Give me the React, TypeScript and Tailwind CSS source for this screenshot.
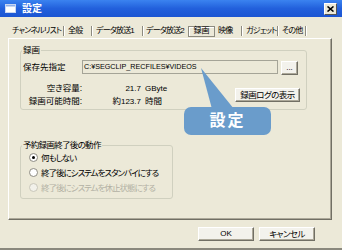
import React from 'react'

const JP = "font-['Liberation_Sans','Noto_Sans_CJK_JP',sans-serif] [font-feature-settings:'palt']"

const Sep = () => (
  <span className="shrink-0 w-[2px] h-[10px] border-l border-l-[#8d8b80] border-r border-r-white" />
)

function Tab({ label, w, pl = 0 }: { label: string; w: string; pl?: number }) {
  return (
    <span className={`shrink-0 whitespace-nowrap text-[8px] tracking-[-0.8px] ${w}`} style={{ paddingLeft: pl }}>
      {label}
    </span>
  )
}

function Btn({ children, className = '' }: { children: React.ReactNode; className?: string }) {
  return (
    <div
      className={`flex items-center justify-center bg-[#f3f2ec] border border-t-white border-l-white border-r-[#716f64] border-b-[#716f64] shadow-[inset_-1px_-1px_0_#aca899] whitespace-nowrap ${className}`}
    >
      {children}
    </div>
  )
}

function Radio({ label, checked = false, disabled = false }: { label: string; checked?: boolean; disabled?: boolean }) {
  return (
    <div className="flex items-center h-[15px] pl-[8px] gap-[3px]">
      <span
        className={`shrink-0 flex items-center justify-center w-[9px] h-[9px] rounded-full border ${
          disabled ? 'border-[#c9c7ba] bg-[#f2f1ea]' : 'border-[#8e8c82] bg-white'
        }`}
      >
        {checked && <span className="w-[3px] h-[3px] rounded-full bg-black" />}
      </span>
      <span className={`whitespace-nowrap tracking-[-1px] ${disabled ? 'text-[#b3b1a4]' : 'text-black'}`}>{label}</span>
    </div>
  )
}

export default function App() {
  return (
    <div className={`relative w-[342px] h-[250px] bg-[#ece9d8] border-b-2 border-b-[#8a887d] text-[8.5px] leading-[12px] text-black ${JP}`}>
      {/* Title bar */}
      <div className="flex items-center h-[17px] bg-gradient-to-b from-[#3b83f0] via-[#2260dc] to-[#1b55d2]">
        <svg width="11" height="9" viewBox="0 0 11 9" className="ml-[5px]">
          <rect x="0.5" y="0.5" width="10" height="8" fill="#fff" stroke="#c8d6f2" />
          <rect x="1" y="1" width="9" height="1.5" fill="#8fb0ea" />
        </svg>
        <span className="ml-[6px] text-white font-bold text-[10px]">設定</span>
        <div className="ml-auto mr-[5px] w-[13px] h-[12px] flex items-center justify-center bg-[#ece9d8] border border-t-white border-l-white border-r-[#555] border-b-[#555]">
          <svg width="7" height="6" viewBox="0 0 7 6">
            <path d="M0.5 0.5 L6.5 5.5 M6.5 0.5 L0.5 5.5" stroke="#000" strokeWidth="1.6" />
          </svg>
        </div>
      </div>

      {/* Tabs */}
      <div className="flex items-center h-[12px] mt-[8px] pl-[12px]">
        <Tab label="チャンネルリスト" w="w-[51px]" />
        <Sep />
        <Tab label="全般" w="w-[26px]" pl={3} />
        <Sep />
        <Tab label="データ放送1" w="w-[49px]" pl={3} />
        <Sep />
        <Tab label="データ放送2" w="w-[44px]" pl={2} />
        <span className="shrink-0 w-[27px] h-[11px] flex items-center justify-center border border-[#8d8b80] shadow-[inset_1px_1px_0_#fff] text-[8px]">
          録画
        </span>
        <Tab label="映像" w="w-[26px]" pl={3} />
        <Sep />
        <Tab label="ガジェット" w="w-[34px]" pl={3} />
        <Sep />
        <Tab label="その他" w="w-[26px]" pl={3} />
        <Sep />
      </div>

      {/* Panel */}
      <div className="ml-[8px] mt-[1px] w-[324px] h-[182px] border border-t-white border-l-white border-r-[#716f64] border-b-[#716f64] shadow-[inset_-1px_-1px_0_#aca899] pl-[11px] pt-[5px]">
        <fieldset className="w-[287px] h-[66px] border border-[#d0d0bf] rounded-[3px]">
          <legend className="ml-[1px] px-[1px]">録画</legend>
          <div className="flex items-start mt-[4px]">
            <span className="w-[61px] pl-[2px] leading-[14px]">保存先指定</span>
            <div className="w-[196px] h-[14px] border border-[#a5a497] bg-[#ece9d8] pl-[1px] text-[7.2px] leading-[12px] whitespace-nowrap">
              C:¥SEGCLIP_RECFILES¥VIDEOS
            </div>
            <Btn className="ml-[3px] mt-[1px] w-[17px] h-[14px] text-[8px] leading-[8px]">...</Btn>
          </div>
          <div className="flex items-start mt-[7px] pr-[6px]">
            <div className="grid grid-cols-[61px_59px_auto] leading-[13px]">
              <span className="text-right">空き容量:</span>
              <span className="text-right text-[8px]">21.7</span>
              <span className="pl-[4px] text-[8px]">GByte</span>
              <span className="text-right">録画可能時間:</span>
              <span className="text-right text-[8px]">
                <span className="text-[8.5px]">約</span>123.7
              </span>
              <span className="pl-[4px]">時間</span>
            </div>
            <Btn className="ml-auto mt-[6px] w-[65px] h-[14px] tracking-[-0.5px]">録画ログの表示</Btn>
          </div>
        </fieldset>

        <fieldset className="mt-[29px] w-[153px] h-[60px] border border-[#d0d0bf] rounded-[3px]">
          <legend className="ml-[1px] px-[1px] tracking-[-0.7px] whitespace-nowrap">予約録画終了後の動作</legend>
          <div className="-mt-[1px]">
            <Radio label="何もしない" checked />
            <Radio label="終了後にシステムをスタンバイにする" />
            <Radio label="終了後にシステムを休止状態にする" disabled />
          </div>
        </fieldset>
      </div>

      {/* Buttons */}
      <div className="flex justify-end gap-[5px] pr-[27px] mt-[7px]">
        <Btn className="w-[56px] h-[14px] text-[8px]">OK</Btn>
        <Btn className="w-[56px] h-[14px] tracking-[-0.6px]">キャンセル</Btn>
      </div>

      {/* Callout */}
      <svg width="45" height="50" viewBox="0 0 45 50" className="absolute left-[195px] top-[60px]">
        <polygon points="6,8 17,49 39,49" fill="#6a9ccb" />
      </svg>
      <div className="absolute left-[184px] top-[107px] w-[87px] h-[28px] rounded-[7px] bg-[#6a9ccb] flex items-center justify-center text-white font-bold text-[16px] leading-[16px] tracking-[2px]">
        設定
      </div>
    </div>
  )
}
